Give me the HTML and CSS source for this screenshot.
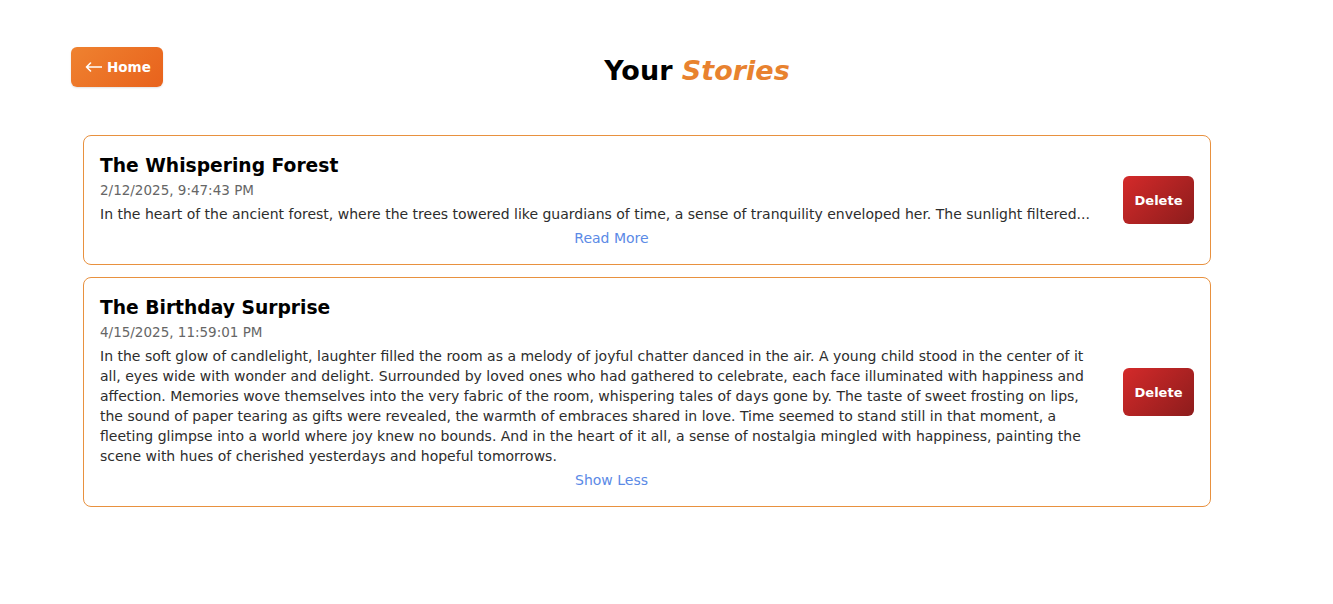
FILE: index.html
```html
<!DOCTYPE html>
<html lang="en">
<head>
<meta charset="utf-8">
<title>Your Stories</title>
<link rel="stylesheet" href="styles.css">
</head>
<body>
<div class="page">
  <header class="header">
    <button class="home-btn">
      <svg class="arrow" width="17" height="10" viewBox="0 0 17 10" aria-hidden="true"><path d="M16.5 5H1.5M5.5 1L1.5 5L5.5 9" fill="none" stroke="#fff" stroke-width="1.6" stroke-linecap="round" stroke-linejoin="round"/></svg>
      <span>Home</span>
    </button>
    <h1 class="title">Your <em>Stories</em></h1>
  </header>
  <main class="stories">
    <article class="card">
      <div class="card-body">
        <h2 class="story-title">The Whispering Forest</h2>
        <div class="story-date">2/12/2025, 9:47:43 PM</div>
        <p class="story-text clamp">In the heart of the ancient forest, where the trees towered like guardians of time, a sense of tranquility enveloped her. The sunlight filtered...</p>
        <a class="toggle">Read More</a>
      </div>
      <button class="delete-btn">Delete</button>
    </article>
    <article class="card">
      <div class="card-body">
        <h2 class="story-title">The Birthday Surprise</h2>
        <div class="story-date">4/15/2025, 11:59:01 PM</div>
        <p class="story-text">In the soft glow of candlelight, laughter filled the room as a melody of joyful chatter danced in the air. A young child stood in the center of it all, eyes wide with wonder and delight. Surrounded by loved ones who had gathered to celebrate, each face illuminated with happiness and affection. Memories wove themselves into the very fabric of the room, whispering tales of days gone by. The taste of sweet frosting on lips, the sound of paper tearing as gifts were revealed, the warmth of embraces shared in love. Time seemed to stand still in that moment, a fleeting glimpse into a world where joy knew no bounds. And in the heart of it all, a sense of nostalgia mingled with happiness, painting the scene with hues of cherished yesterdays and hopeful tomorrows.</p>
        <a class="toggle">Show Less</a>
      </div>
      <button class="delete-btn">Delete</button>
    </article>
  </main>
</div>
</body>
</html>
```

FILE: styles.css
```css
* { box-sizing: border-box; }

body {
  margin: 0;
  background: #ffffff;
  font-family: "DejaVu Sans", "Open Sans", sans-serif;
  color: #222;
}

.page {
  padding: 47px 102px 0 71px;
}

.header {
  display: flex;
  align-items: flex-start;
}

.home-btn {
  height: 40px;
  width: 92px;
  border: none;
  border-radius: 6px;
  background: linear-gradient(135deg, #ef8230 0%, #e8621c 100%);
  color: #fff;
  font-family: inherit;
  font-weight: 700;
  font-size: 13.5px;
  padding: 0 0 0 14px;
  display: flex;
  align-items: center;
  gap: 5px;
  box-shadow: 0 1px 2px rgba(0,0,0,0.12);
}

.arrow {
  display: block;
  flex-shrink: 0;
}

.title {
  flex: 1;
  margin: 0;
  padding-top: 6px;
  text-align: center;
  font-size: 27px;
  line-height: 36px;
  font-weight: 700;
  color: #000;
}

.title em {
  color: #e8822f;
  font-style: italic;
}

.stories {
  margin: 46px 20px 0 12px;
  display: flex;
  flex-direction: column;
  gap: 12px;
}

.card {
  border: 1px solid #e8913f;
  border-radius: 8px;
  padding: 16px;
  display: flex;
  align-items: center;
}

.card-body {
  flex: 1;
  min-width: 0;
  display: flex;
  flex-direction: column;
}

.story-title {
  margin: 0;
  font-size: 18.7px;
  line-height: 28px;
  font-weight: 700;
  color: #000;
}

.story-date {
  font-size: 13.5px;
  line-height: 20px;
  color: #666666;
}

.story-text {
  margin: 4px 0 0;
  padding-right: 28px;
  font-size: 14px;
  line-height: 20px;
  color: #2d2d2d;
}

.clamp {
  white-space: nowrap;
  overflow: hidden;
  text-overflow: ellipsis;
}

.toggle {
  margin-top: 4px;
  align-self: center;
  font-size: 14px;
  line-height: 20px;
  color: #5b8ae6;
  cursor: pointer;
}

.delete-btn {
  width: 71px;
  height: 48px;
  border: none;
  border-radius: 6px;
  background: linear-gradient(135deg, #d42a2a 0%, #8c1c1c 100%);
  color: #fff;
  font-family: inherit;
  font-size: 13px;
  font-weight: 700;
  flex-shrink: 0;
}
```
